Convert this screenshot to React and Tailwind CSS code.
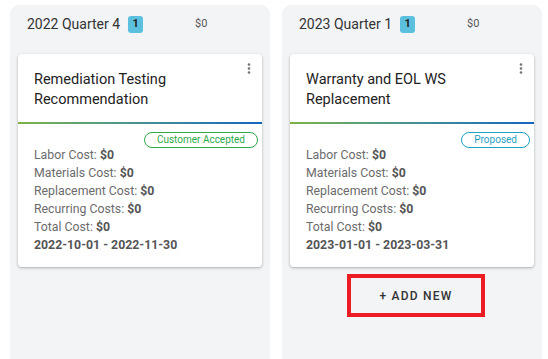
import React from 'react';

const columns = [
  {
    title: '2022 Quarter 4',
    count: 1,
    total: '$0',
    card: {
      title: 'Remediation Testing Recommendation',
      status: 'Customer Accepted',
      statusClass: 'border-[#2eaa4a] text-[#2eaa4a]',
      dates: '2022-10-01 - 2022-11-30',
    },
    addNew: false,
  },
  {
    title: '2023 Quarter 1',
    count: 1,
    total: '$0',
    card: {
      title: 'Warranty and EOL WS Replacement',
      status: 'Proposed',
      statusClass: 'border-[#1fa0c4] text-[#1fa0c4]',
      dates: '2023-01-01 - 2023-03-31',
    },
    addNew: true,
  },
];

const costs = ['Labor Cost', 'Materials Cost', 'Replacement Cost', 'Recurring Costs', 'Total Cost'];

function Card({ card }) {
  return (
    <div className="relative mx-2 bg-white rounded-[4px] shadow-[0_1px_3px_rgba(0,0,0,0.3)]">
      <svg width="4" height="11" viewBox="0 0 4 11" className="absolute top-[9px] right-[11px]">
        <circle cx="2" cy="1.5" r="1.3" fill="#757575" />
        <circle cx="2" cy="5.5" r="1.3" fill="#757575" />
        <circle cx="2" cy="9.5" r="1.3" fill="#757575" />
      </svg>
      <div className="px-4 pt-4 pb-3 pr-10 text-[14.5px] leading-[20px] text-[#222]">{card.title}</div>
      <div className="h-[2px] bg-gradient-to-r from-[#7cb342] to-[#1565c0]" />
      <div className="flex justify-end pr-1 pt-2">
        <span className={`h-[16px] px-[12px] flex items-center rounded-full border text-[10px] leading-none ${card.statusClass}`}>
          {card.status}
        </span>
      </div>
      <div className="px-4 -mt-[2px] pb-[13px] text-[12.3px] leading-[18px]">
        {costs.map((c) => (
          <div key={c} className="text-[#6b6b6b]">
            {c}: <span className="font-bold text-[#555]">$0</span>
          </div>
        ))}
        <div className="font-bold text-[#555]">{card.dates}</div>
      </div>
    </div>
  );
}

export default function App() {
  return (
    <div className="w-[548px] h-[359px] overflow-hidden bg-white flex gap-3 pl-[10px] pt-[5px] font-['Roboto',sans-serif]">
      {columns.map((col) => (
        <div key={col.title} className="w-[260px] h-[370px] bg-[#f3f4f6] rounded-[9px] flex flex-col">
          <div className="h-[38px] flex items-center pl-[17px] pr-4 pt-[1px]">
            <span className="text-[14px] text-[#333]">{col.title}</span>
            <span className="ml-2 w-[15px] h-[17px] rounded-[3px] bg-[#5bc0de] flex items-center justify-center text-[11px] font-bold text-[#222]">
              {col.count}
            </span>
            <span className="ml-[52px] text-[11px] text-[#555]">{col.total}</span>
          </div>
          <div className="mt-[11px]">
            <Card card={col.card} />
          </div>
          {col.addNew && (
            <div className="flex justify-center mt-[7px] pl-2">
              <div className="w-[138px] h-[43px] border-4 border-[#ed1c24] flex items-center justify-center text-[12px] font-medium tracking-[1.2px] text-[#333]">
                + ADD NEW
              </div>
            </div>
          )}
        </div>
      ))}
    </div>
  );
}
